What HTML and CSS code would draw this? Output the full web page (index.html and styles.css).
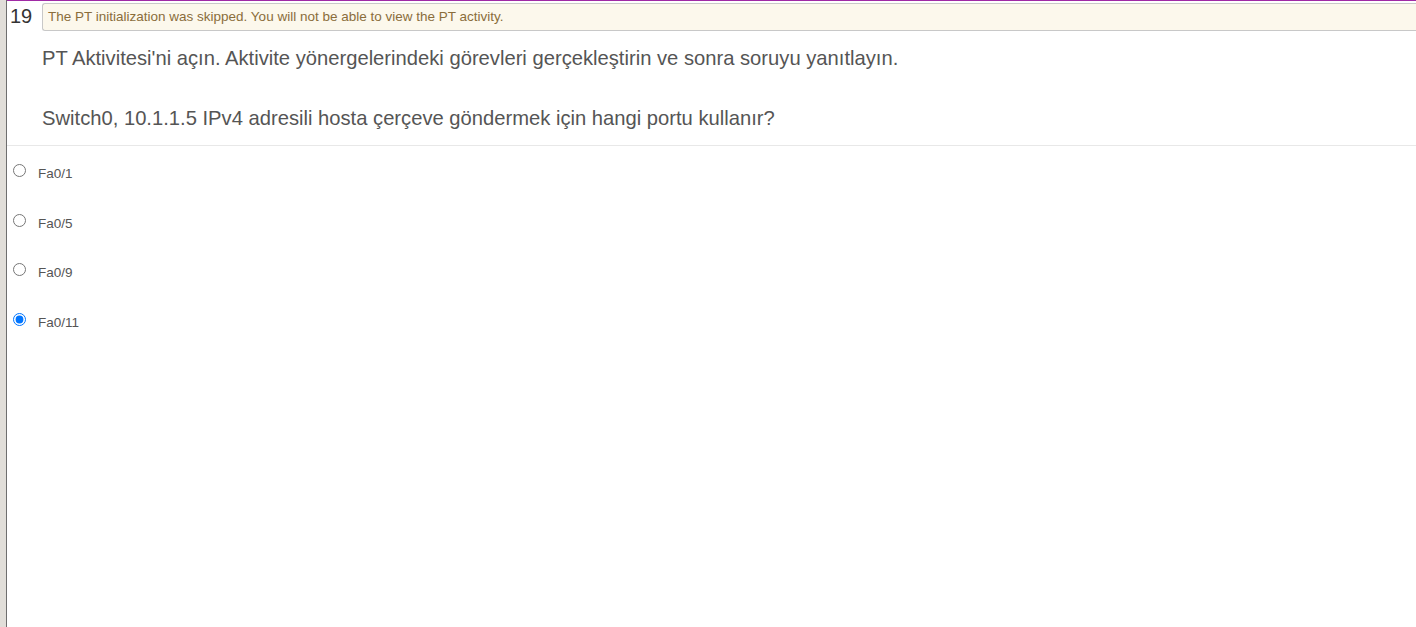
FILE: index.html
```html
<!DOCTYPE html>
<html>
<head>
<meta charset="utf-8">
<link rel="stylesheet" href="styles.css">
</head>
<body>
<div class="frame">
  <div class="side"></div>
  <div class="main">
    <div class="head">
      <span class="num">19</span>
      <div class="alert">The PT initialization was skipped. You will not be able to view the PT activity.</div>
    </div>
    <div class="question">
      <p>PT Aktivitesi'ni açın. Aktivite yönergelerindeki görevleri gerçekleştirin ve sonra soruyu yanıtlayın.</p>
      <p>Switch0, 10.1.1.5 IPv4 adresili hosta çerçeve göndermek için hangi portu kullanır?</p>
    </div>
    <div class="options">
      <label class="opt"><input type="radio" name="q"><span>Fa0/1</span></label>
      <label class="opt"><input type="radio" name="q"><span>Fa0/5</span></label>
      <label class="opt"><input type="radio" name="q"><span>Fa0/9</span></label>
      <label class="opt"><input type="radio" name="q" checked><span>Fa0/11</span></label>
    </div>
  </div>
</div>
</body>
</html>
```

FILE: styles.css
```css
html, body {
  margin: 0;
  padding: 0;
  height: 100%;
  background: #fff;
  font-family: "Liberation Sans", Arial, sans-serif;
}
.frame {
  display: flex;
  height: 627px;
  overflow: hidden;
}
.side {
  width: 6px;
  background: #e1ded9;
  border-right: 1px solid #6e6e6e;
  flex: none;
}
.main {
  flex: 1;
  border-top: 1px solid #a02aa5;
  min-width: 0;
}
.head {
  display: flex;
  align-items: flex-start;
  padding-top: 2px;
}
.num {
  width: 35px;
  padding-left: 3px;
  box-sizing: border-box;
  font-size: 20px;
  line-height: 26px;
  color: #333;
  flex: none;
}
.alert {
  flex: 1;
  height: 26px;
  border: 1px solid #c8c8c8;
  border-right: none;
  border-radius: 3px 0 0 3px;
  background: #fcf8ec;
  color: #8a6d3b;
  font-size: 13.5px;
  line-height: 26px;
  padding-left: 5px;
}
.question {
  padding: 16px 0 0 35px;
  border-bottom: 1px solid #e8e8e8;
  box-sizing: border-box;
  height: 115px;
}
.question p {
  margin: 0 0 37px 0;
  font-size: 20.2px;
  line-height: 23px;
  color: #555;
}
.options {
  display: flex;
  flex-direction: column;
  padding-top: 18px;
}
.opt {
  display: flex;
  align-items: flex-start;
  height: 49.7px;
  font-size: 13.5px;
  color: #555;
}
.opt input {
  margin: 0 0 0 6px;
  width: 13px;
  height: 13px;
}
.opt span {
  margin-left: 12px;
  padding-top: 2px;
}
```
